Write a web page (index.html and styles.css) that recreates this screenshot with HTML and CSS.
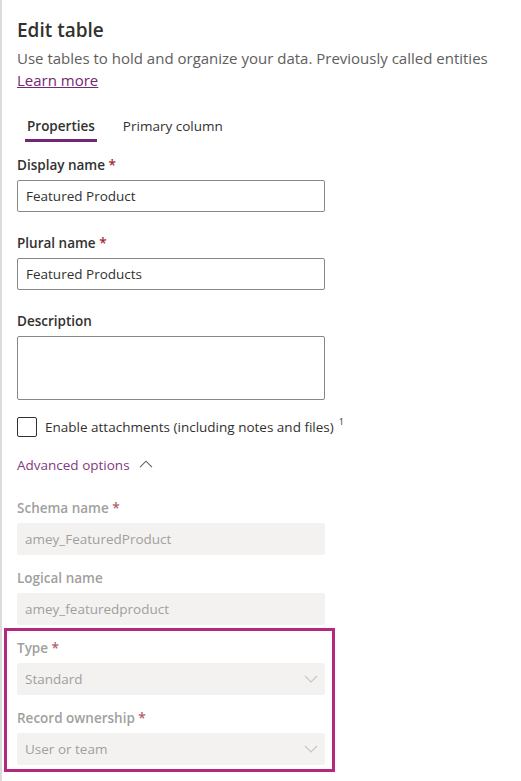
FILE: index.html
```html
<!DOCTYPE html>
<html lang="en">
<head>
<meta charset="utf-8">
<title>Edit table</title>
<link rel="stylesheet" href="styles.css">
</head>
<body>
<div class="panel">
  <h1 class="title">Edit table</h1>
  <p class="subtitle">Use tables to hold and organize your data. Previously called entities</p>
  <a class="learn" href="#">Learn more</a>

  <div class="tabs">
    <span class="tab active">Properties</span>
    <span class="tab">Primary column</span>
  </div>

  <div class="field first">
    <label class="label">Display name <span class="req">*</span></label>
    <div class="input">Featured Product</div>
  </div>
  <div class="field">
    <label class="label">Plural name <span class="req">*</span></label>
    <div class="input">Featured Products</div>
  </div>
  <div class="field">
    <label class="label">Description</label>
    <div class="input textarea"></div>
  </div>

  <div class="check-row">
    <span class="checkbox"></span>
    <span class="check-text">Enable attachments (including notes and files)</span>
    <sup class="sup">1</sup>
  </div>

  <div class="advanced">
    <span>Advanced options</span>
    <svg class="chev-up" width="14" height="8" viewBox="0 0 14 8"><path d="M1 7.2 L7 1.2 L13 7.2" fill="none" stroke="#605e5c" stroke-width="1.1"/></svg>
  </div>

  <div class="field dis first-dis">
    <label class="label">Schema name <span class="req">*</span></label>
    <div class="input disabled">amey_FeaturedProduct</div>
  </div>
  <div class="field dis">
    <label class="label">Logical name</label>
    <div class="input disabled">amey_featuredproduct</div>
  </div>

  <div class="highlight">
    <div class="field dis in-box">
      <label class="label">Type <span class="req">*</span></label>
      <div class="input disabled select"><span>Standard</span>
        <svg width="14" height="8" viewBox="0 0 14 8"><path d="M1 1 L7 7 L13 1" fill="none" stroke="#c8c6c4" stroke-width="1.1"/></svg>
      </div>
    </div>
    <div class="field dis">
      <label class="label">Record ownership <span class="req">*</span></label>
      <div class="input disabled select"><span>User or team</span>
        <svg width="14" height="8" viewBox="0 0 14 8"><path d="M1 1 L7 7 L13 1" fill="none" stroke="#c8c6c4" stroke-width="1.1"/></svg>
      </div>
    </div>
  </div>
</div>
</body>
</html>
```

FILE: styles.css
```css
html, body {
  margin: 0;
  padding: 0;
  background: #ffffff;
}
body {
  font-family: "Open Sans", "Noto Sans", sans-serif;
  color: #323130;
  font-size: 13.5px;
}
.panel {
  min-height: 781px;
  box-sizing: border-box;
  border-left: 2px solid #dcdcdc;
  padding: 16px 0 0 15px;
}
.title {
  margin: 0;
  font-size: 19px;
  line-height: 28px;
  font-weight: 600;
  color: #323130;
}
.subtitle {
  margin: 3px 0 0;
  font-size: 15px;
  line-height: 22px;
  color: #605e5c;
}
.learn {
  display: inline-block;
  font-size: 15px;
  line-height: 22px;
  color: #742774;
  text-decoration: underline;
}
.tabs {
  display: flex;
  margin-top: 25px;
  margin-left: 8px;
  gap: 24px;
}
.tab {
  font-size: 13.5px;
  line-height: 20px;
  padding: 0 2px 3px;
  border-bottom: 3px solid transparent;
  color: #323130;
}
.tab.active {
  font-weight: 600;
  border-bottom-color: #742774;
}
.field {
  display: flex;
  flex-direction: column;
  margin-top: 21px;
  width: 308px;
}
.field.first {
  margin-top: 13px;
}
.label {
  font-size: 13.5px;
  line-height: 20px;
  font-weight: 600;
  color: #323130;
  margin-bottom: 5px;
}
.req {
  color: #a4262c;
}
.input {
  box-sizing: border-box;
  height: 32px;
  border: 1px solid #8a8886;
  border-radius: 2px;
  padding: 0 8px;
  display: flex;
  align-items: center;
  font-size: 13.5px;
  color: #323130;
}
.input.textarea {
  height: 64px;
}
.check-row {
  display: flex;
  align-items: center;
  margin-top: 17px;
  height: 20px;
}
.checkbox {
  box-sizing: border-box;
  width: 20px;
  height: 20px;
  border: 1px solid #323130;
  border-radius: 2px;
  margin-right: 8px;
}
.check-text {
  font-size: 13.5px;
  color: #323130;
}
.sup {
  font-size: 9px;
  margin-left: 5px;
  align-self: flex-start;
  line-height: 10px;
}
.advanced {
  display: flex;
  align-items: center;
  gap: 9px;
  margin-top: 18px;
  height: 20px;
  font-size: 13.5px;
  color: #7f3a80;
}
.advanced .chev-up {
  margin-top: -2px;
}
.field.dis {
  margin-top: 13px;
}
.field.first-dis {
  margin-top: 23px;
}
.field.dis .label {
  color: #a19f9d;
  margin-bottom: 5px;
}
.field.dis .req {
  color: #b0606a;
}
.input.disabled {
  border: none;
  background: #f3f2f1;
  color: #a19f9d;
}
.input.select {
  justify-content: space-between;
  padding-right: 7px;
}
.highlight {
  margin-top: 3px;
  margin-left: -13px;
  width: 331px;
  box-sizing: border-box;
  border: 3px solid #b5287f;
  padding: 7px 7px 4px 10px;
}
.highlight .field.in-box {
  margin-top: 0;
}
```
